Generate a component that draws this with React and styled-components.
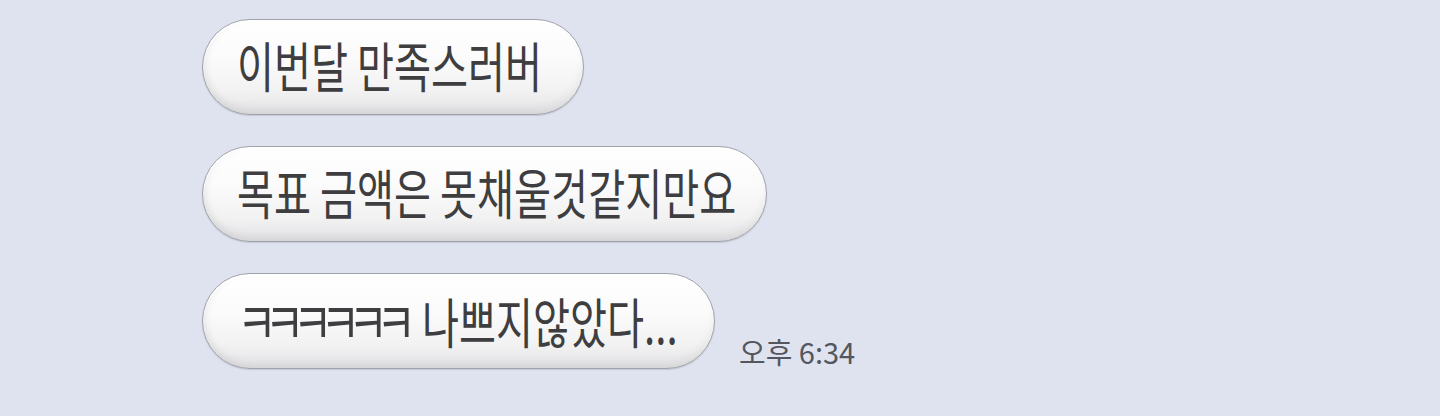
import React from 'react'
import styled, { createGlobalStyle } from 'styled-components'

const GlobalStyle = createGlobalStyle`
  html, body {
    margin: 0;
    padding: 0;
    background: #dfe3ef;
  }
`

const ChatContainer = styled.div`
  width: 1440px;
  height: 416px;
  box-sizing: border-box;
  padding: 19px 0 0 202px;

  display: flex;
  flex-flow: column nowrap;
  gap: 31px;

  background: #dfe3ef;
  font-family: "Noto Sans CJK KR", "Noto Sans", sans-serif;
  overflow: hidden;
`

const MessageRow = styled.div`
  display: flex;
  flex-flow: row nowrap;
  align-items: flex-end;
  gap: 24px;
`

const Bubble = styled.div`
  width: ${props => props.$width}px;
  height: 96px;
  box-sizing: border-box;
  padding-left: 34px;

  display: flex;
  align-items: center;

  border-radius: 48px;
  border: 1px solid #a0a2aa;
  background: linear-gradient(to bottom, #ffffff 0%, #fbfbfb 40%, #f2f2f3 75%, #e4e4e6 100%);
  box-shadow:
    inset 0 2px 2px rgba(255, 255, 255, 1),
    inset 0 -6px 8px rgba(0, 0, 0, 0.05),
    inset 4px 0 6px rgba(0, 0, 0, 0.04),
    0 1px 1px rgba(120, 124, 140, 0.25);
  overflow: hidden;
`

const BubbleText = styled.span`
  display: inline-block;
  white-space: nowrap;
  font-size: 54px;
  font-weight: 400;
  line-height: 1;
  color: #3e3e41;
  transform: scaleX(0.745);
  transform-origin: left center;
  margin-top: -4px;
`

const Laugh = styled.span`
  font-size: 58px;
  letter-spacing: -16px;
  margin-right: 12px;
`

const TimeStamp = styled.span`
  font-size: 29px;
  color: #54575e;
  line-height: 1;
  margin-bottom: 3px;
  white-space: nowrap;
`

const messages = [
  { id: 1, width: 382, text: '이번달 만족스러버' },
  { id: 2, width: 565, text: '목표 금액은 못채울것같지만요' },
  { id: 3, width: 513, laugh: 'ㅋㅋㅋㅋㅋㅋ', text: ' 나쁘지않았다...', time: '오후 6:34' },
]

function App() {
  return (
    <>
      <GlobalStyle />
      <ChatContainer>
        {messages.map(function (item) {
          return (
            <MessageRow key={item.id}>
              <Bubble $width={item.width}>
                <BubbleText>
                  {item.laugh && <Laugh>{item.laugh}</Laugh>}
                  {item.text}
                </BubbleText>
              </Bubble>
              {item.time && <TimeStamp>{item.time}</TimeStamp>}
            </MessageRow>
          )
        })}
      </ChatContainer>
    </>
  )
}

export default App
